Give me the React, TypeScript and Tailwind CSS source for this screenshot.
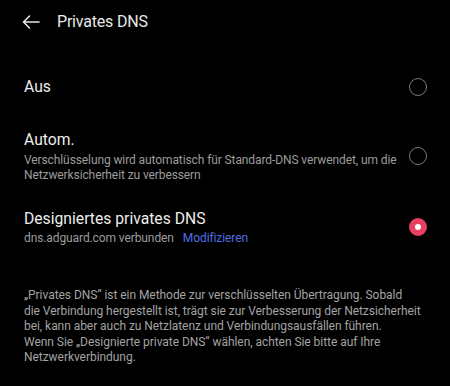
import React from "react";

function Radio({ checked }: { checked?: boolean }) {
  if (checked) {
    return (
      <div className="w-[18px] h-[18px] rounded-full bg-[#e8405f] flex items-center justify-center shrink-0">
        <div className="w-[6px] h-[6px] rounded-full bg-white" />
      </div>
    );
  }
  return <div className="w-[18px] h-[18px] rounded-full border border-[#7a7a7a] shrink-0" />;
}

const footerLines = [
  "„Privates DNS“ ist ein Methode zur verschlüsselten Übertragung. Sobald",
  "die Verbindung hergestellt ist, trägt sie zur Verbesserung der Netzsicherheit",
  "bei, kann aber auch zu Netzlatenz und Verbindungsausfällen führen.",
  "Wenn Sie „Designierte private DNS“ wählen, achten Sie bitte auf Ihre",
  "Netzwerkverbindung.",
];

export default function App() {
  return (
    <div className="w-[450px] h-[386px] bg-black overflow-hidden font-['Roboto',sans-serif] text-[#ededed]">
      <div className="flex items-center h-[44px] pl-[22px]">
        <svg width="18" height="14" viewBox="0 0 18 14" fill="none" stroke="#e6e6e6" strokeWidth="1.6" strokeLinecap="round" strokeLinejoin="round">
          <path d="M17 7H1.5M7.5 1L1.5 7l6 6" />
        </svg>
        <span className="ml-[17px] text-[16px] tracking-[-0.2px] text-[#e8e8e8]">Privates DNS</span>
      </div>

      <div className="flex items-center justify-between pl-[24px] pr-[23px] mt-[31px] h-[24px]">
        <span className="text-[15.7px]">Aus</span>
        <Radio />
      </div>

      <div className="flex items-center justify-between pl-[24px] pr-[23px] mt-[30px]">
        <div className="flex flex-col">
          <span className="text-[15.7px] leading-[22px]">Autom.</span>
          <span className="text-[12px] tracking-[-0.1px] leading-[15px] text-[#9c9c9c] mt-[2px] max-w-[380px]">
            Verschlüsselung wird automatisch für Standard-DNS verwendet, um die Netzwerksicherheit zu verbessern
          </span>
        </div>
        <Radio />
      </div>

      <div className="flex items-center justify-between pl-[24px] pr-[23px] mt-[25px]">
        <div className="flex flex-col">
          <span className="text-[15.7px] leading-[22px]">Designiertes privates DNS</span>
          <span className="text-[12px] tracking-[-0.1px] leading-[16px] text-[#9c9c9c]">
            dns.adguard.com verbunden<span className="ml-[9px] text-[#4f6fe0]">Modifizieren</span>
          </span>
        </div>
        <Radio checked />
      </div>

      <div className="flex flex-col pl-[24px] pr-[20px] mt-[42px] text-[12px] tracking-[-0.05px] leading-[15.5px] text-[#a3a3a3]">
        {footerLines.map((l) => (
          <span key={l} className="whitespace-nowrap">{l}</span>
        ))}
      </div>
    </div>
  );
}
